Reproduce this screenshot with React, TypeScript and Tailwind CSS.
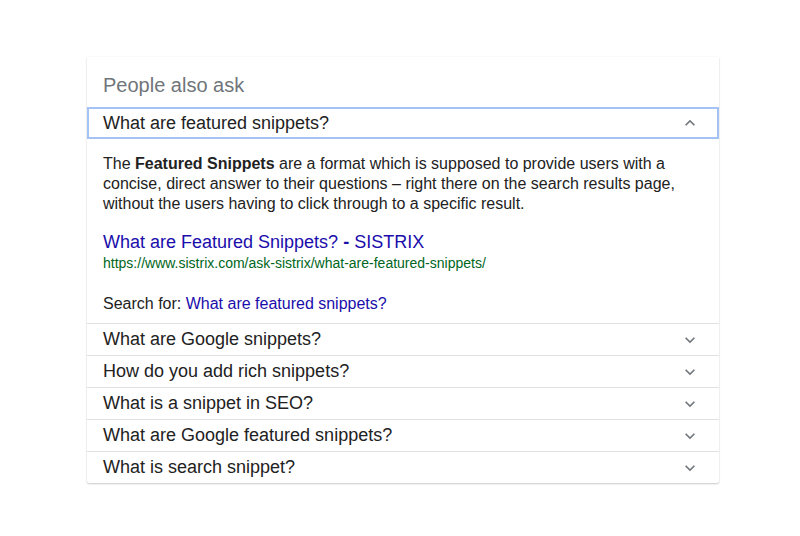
const QUESTIONS = [
  "What are Google snippets?",
  "How do you add rich snippets?",
  "What is a snippet in SEO?",
  "What are Google featured snippets?",
  "What is search snippet?",
];

function Chevron({ up = false }: { up?: boolean }) {
  return (
    <svg width="20" height="20" viewBox="0 0 24 24" className="shrink-0 text-[#70757a]">
      <path
        d={up ? "M7.41 15.41 12 10.83l4.59 4.58L18 14l-6-6-6 6z" : "M7.41 8.59 12 13.17l4.59-4.58L18 10l-6 6-6-6z"}
        fill="currentColor"
      />
    </svg>
  );
}

export default function App() {
  return (
    <div className="min-h-screen bg-white pt-[57px] font-['Liberation_Sans',Arial,sans-serif]">
      <div className="ml-[87px] w-[632px] rounded-b-[2px] bg-white shadow-[0_1px_2px_rgba(0,0,0,0.2),0_0_1px_rgba(0,0,0,0.12)]">
        <div className="flex h-[50px] items-center px-4 pt-[6px] text-[20px] text-[#70757a]">People also ask</div>

        {/* expanded question */}
        <div className="flex h-[32px] items-center justify-between border-2 border-[#a4c2f4] pl-[14px] pr-[17px] text-[18px] text-[#222]">
          <span>What are featured snippets?</span>
          <Chevron up />
        </div>
        <div className="px-4 pb-[9px] pt-[15px] text-[16px] leading-[20px] text-[#222]">
          <p>
            The <b>Featured Snippets</b> are a format which is supposed to provide users with a concise, direct answer to
            their questions – right there on the search results page, without the users having to click through to a
            specific result.
          </p>
          <div className="mt-[16px] text-[18px] leading-[24px] text-[#1a0dab]">
            What are Featured Snippets? <b>-</b> SISTRIX
          </div>
          <div className="text-[14px] leading-[18px] text-[#006621]">
            https://www.sistrix.com/ask-sistrix/what-are-featured-snippets/
          </div>
          <div className="mt-[22px] leading-[20px]">
            Search for: <span className="text-[#1a0dab]">What are featured snippets?</span>
          </div>
        </div>

        {QUESTIONS.map((q) => (
          <div
            key={q}
            className="flex h-[32px] items-center justify-between border-t border-[#dfe1e5] pl-4 pr-[19px] text-[18px] text-[#222]"
          >
            <span>{q}</span>
            <Chevron />
          </div>
        ))}
      </div>
    </div>
  );
}
